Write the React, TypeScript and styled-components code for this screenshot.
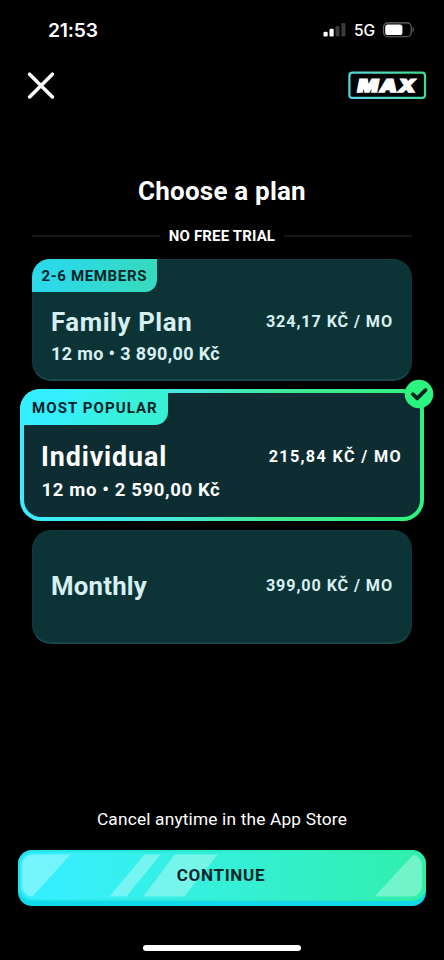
import React from "react";
import styled, { createGlobalStyle, css } from "styled-components";

const GlobalStyle = createGlobalStyle`
  * { box-sizing: border-box; }
  body { margin: 0; background: #000; }
`;

const Screen = styled.div`
  width: 444px;
  height: 960px;
  background: #000;
  color: #fff;
  font-family: Roboto, "Liberation Sans", sans-serif;
  font-weight: 700;
  display: flex;
  flex-direction: column;
  overflow: hidden;
  white-space: nowrap;
`;

const StatusBar = styled.header`
  height: 60px;
  padding: 0 29px 0 48px;
  display: flex;
  align-items: center;
  justify-content: space-between;
  font-family: Inter, sans-serif;
`;

const Clock = styled.time`
  font-size: 19.3px;
  font-weight: 600;
  letter-spacing: -0.2px;
`;

const StatusIcons = styled.div`
  display: flex;
  align-items: center;
  height: 22px;
`;

const Network = styled.span`
  margin: 1px 8px 0 8px;
  width: 21px;
  font-size: 15.5px;
  font-weight: 500;
  letter-spacing: -0.2px;
`;

const NavBar = styled.nav`
  height: 50px;
  padding: 0 17px 0 27px;
  display: flex;
  align-items: center;
  justify-content: space-between;
`;

const CloseButton = styled.button`
  border: 0;
  padding: 0;
  background: none;
  width: 28px;
  height: 28px;
`;

const Title = styled.h1`
  margin: 66px 0 0;
  font-size: 26px;
  line-height: 30px;
  letter-spacing: 0.2px;
  text-align: center;
`;

const TrialDivider = styled.div`
  margin: 20px 32px 0;
  height: 20px;
  display: flex;
  align-items: center;
  gap: 9px;
  font-size: 15px;
  line-height: 20px;
  letter-spacing: 0.15px;

  &::before,
  &::after {
    content: "";
    flex: 1;
    height: 2px;
    background: #161616;
  }
`;

const Plans = styled.main`
  margin-top: 13px;
  display: flex;
  flex-direction: column;
  align-items: center;
`;

const Card = styled.section<{ $selected?: boolean; $height: number }>`
  position: relative;
  height: ${(p) => p.$height}px;
  display: flex;
  flex-direction: column;
  ${(p) =>
    p.$selected
      ? css`
          width: 404px;
          margin: 8px 0 9px;
          border: 4.5px solid transparent;
          border-radius: 21px;
          background:
            linear-gradient(#0d2d33, #0d2d33) padding-box,
            linear-gradient(100deg, #3bebff 5%, #46e8dc 40%, #41ea91 65%, #2bf37c 100%) border-box;
          color: #fff;
        `
      : css`
          width: 380px;
          border: 1px solid #10393d;
          border-bottom: 2px solid #18464b;
          border-radius: 19px;
          background: #0c3437;
          color: #d8eff1;
        `}
`;

const Ribbon = styled.div<{ $selected?: boolean }>`
  color: #07242a;
  font-size: 15px;
  align-self: flex-start;
  ${(p) =>
    p.$selected
      ? css`
          margin: -4px 0 0 -4px;
          width: 148px;
          height: 36px;
          padding-left: 12px;
          line-height: 38px;
          letter-spacing: 1.08px;
          border-radius: 20px 0 13px 0;
          background: linear-gradient(115deg, #34efff 25%, #38f0d5 75%);
        `
      : css`
          margin: -1px 0 0 -1px;
          width: 125px;
          height: 33px;
          padding-left: 9.5px;
          line-height: 34px;
          letter-spacing: 0.65px;
          border-radius: 18px 0 12px 0;
          background: linear-gradient(115deg, #2cd9e6 25%, #35dac0 85%);
        `}
`;

const PlanRow = styled.div<{ $selected?: boolean; $top: number }>`
  margin-top: ${(p) => p.$top}px;
  padding: ${(p) => (p.$selected ? "0 18px 0 17px" : "0 18px 0 18px")};
  display: flex;
  align-items: center;
  justify-content: space-between;
  height: 30px;
`;

const PlanName = styled.h2<{ $spacing: number; $size?: number }>`
  margin: 0;
  font-size: ${(p) => p.$size ?? 25.8}px;
  line-height: 30px;
  letter-spacing: ${(p) => p.$spacing}px;
`;

const Price = styled.span<{ $spacing: number }>`
  font-size: 16.2px;
  line-height: 30px;
  letter-spacing: ${(p) => p.$spacing}px;
`;

const Terms = styled.p<{ $selected?: boolean }>`
  margin: ${(p) => (p.$selected ? "6px 0 0 17.5px" : "5px 0 0 18px")};
  font-size: ${(p) => (p.$selected ? 18.5 : 18)}px;
  line-height: 24px;
  letter-spacing: ${(p) => (p.$selected ? 0.64 : 0.36)}px;
`;

const CheckBadge = styled.svg`
  position: absolute;
  right: -14px;
  top: -14px;
  width: 30px;
  height: 30px;
`;

const Footer = styled.footer`
  margin-top: auto;
  height: 153px;
  display: flex;
  flex-direction: column;
  align-items: center;
`;

const CancelNote = styled.p`
  margin: 0;
  font-size: 17.3px;
  font-weight: 400;
  line-height: 24px;
  letter-spacing: 0.18px;
`;

const ContinueButton = styled.button`
  position: relative;
  margin: 19px 0 0;
  padding: 0 2px 0 0;
  width: 408px;
  height: 56px;
  border: 0;
  border-radius: 14px;
  overflow: hidden;
  background: #10d9ec;
  color: #05262a;
  font: 700 17px/51px Roboto, sans-serif;
  letter-spacing: 0.7px;
  display: block;
`;

const ButtonFace = styled.svg`
  position: absolute;
  inset: 0;
`;

const ButtonLabel = styled.span`
  position: relative;
  display: block;
  height: 56px;
`;

const HomeIndicator = styled.div`
  margin-top: 39px;
  width: 158px;
  height: 6px;
  border-radius: 3px;
  background: #fff;
`;

const SignalIcon = () => (
  <svg width="23" height="16" viewBox="0 0 23 16">
    <rect x="0.5" y="9.7" width="4.2" height="4.8" rx="1.2" fill="#fff" />
    <rect x="6.5" y="6.8" width="4.2" height="7.7" rx="1.2" fill="#fff" />
    <rect x="12.5" y="4" width="4" height="10.5" rx="1.2" fill="#3a3a3a" />
    <rect x="18.4" y="1" width="4" height="13.5" rx="1.2" fill="#3a3a3a" />
  </svg>
);

const BatteryIcon = () => (
  <svg width="32" height="16" viewBox="0 0 32 16">
    <rect x="0.6" y="0.9" width="27.6" height="13.8" rx="4.2" fill="none" stroke="#6e6e6e" strokeWidth="1.1" />
    <rect x="2.2" y="2.5" width="17.2" height="10.6" rx="2.6" fill="#fff" />
    <path d="M29.6 5.5c1.6.6 1.6 4 0 4.6z" fill="#777" />
  </svg>
);

const CloseIcon = () => (
  <svg width="28" height="28" viewBox="0 0 28 28">
    <path d="M2.6 3.2 25.4 26M25.4 3.2 2.6 26" stroke="#fff" strokeWidth="3.5" strokeLinecap="round" />
  </svg>
);

const MaxLogo = () => (
  <svg width="79" height="28" viewBox="0 0 79 28">
    <defs>
      <linearGradient id="maxFrame" x1="0" y1="0.4" x2="1" y2="0.2">
        <stop offset="0" stopColor="#58d5e0" />
        <stop offset="0.5" stopColor="#4fdcc0" />
        <stop offset="1" stopColor="#3ddb8c" />
      </linearGradient>
    </defs>
    <rect x="1.4" y="1.7" width="75.6" height="25.2" rx="3" fill="none" stroke="url(#maxFrame)" strokeWidth="2.2" />
    <text
      transform="translate(8.6 20.7) skewX(-11) scale(1.24 1)"
      textLength="46.6"
      lengthAdjust="spacing"
      fontFamily="Inter, sans-serif"
      fontSize="17.6"
      fontWeight="900"
      fill="#fff"
      stroke="#fff"
      strokeWidth="1.4"
      strokeLinejoin="miter"
    >
      MAX
    </text>
  </svg>
);

type Plan = {
  name: string;
  price: string;
  ribbon?: string;
  terms?: string;
  selected?: boolean;
  height: number;
  top: number;
  nameSize?: number;
  nameSpacing: number;
  priceSpacing: number;
};

const plans: Plan[] = [
  { name: "Family Plan", price: "324,17 KČ / MO", ribbon: "2-6 MEMBERS", terms: "12 mo • 3 890,00 Kč", height: 122, top: 15, nameSpacing: 0.6, priceSpacing: 0.9 },
  { name: "Individual", price: "215,84 KČ / MO", ribbon: "MOST POPULAR", terms: "12 mo • 2 590,00 Kč", selected: true, height: 132, top: 17, nameSize: 26.8, nameSpacing: 0.9, priceSpacing: 1.35 },
  { name: "Monthly", price: "399,00 KČ / MO", height: 114, top: 40, nameSpacing: 0.2, priceSpacing: 0.9 },
];

const PlanCard = ({ plan }: { plan: Plan }) => (
  <Card $selected={plan.selected} $height={plan.height}>
    {plan.ribbon && <Ribbon $selected={plan.selected}>{plan.ribbon}</Ribbon>}
    <PlanRow $selected={plan.selected} $top={plan.top}>
      <PlanName $spacing={plan.nameSpacing} $size={plan.nameSize}>{plan.name}</PlanName>
      <Price $spacing={plan.priceSpacing}>{plan.price}</Price>
    </PlanRow>
    {plan.terms && <Terms $selected={plan.selected}>{plan.terms}</Terms>}
    {plan.selected && (
      <CheckBadge viewBox="0 0 30 30">
        <circle cx="15" cy="15" r="14.3" fill="#2bf57f" />
        <path d="m8.8 15.2 4.4 4.2 8.4-8.4" fill="none" stroke="#06231f" strokeWidth="3.8" strokeLinecap="round" strokeLinejoin="round" />
      </CheckBadge>
    )}
  </Card>
);

export default function App() {
  return (
    <>
      <GlobalStyle />
      <Screen>
        <StatusBar>
          <Clock>21:53</Clock>
          <StatusIcons>
            <SignalIcon />
            <Network>5G</Network>
            <BatteryIcon />
          </StatusIcons>
        </StatusBar>
        <NavBar>
          <CloseButton aria-label="Close">
            <CloseIcon />
          </CloseButton>
          <MaxLogo />
        </NavBar>
        <Title>Choose a plan</Title>
        <TrialDivider>NO FREE TRIAL</TrialDivider>
        <Plans>
          {plans.map((plan) => (
            <PlanCard key={plan.name} plan={plan} />
          ))}
        </Plans>
        <Footer>
          <CancelNote>Cancel anytime in the App Store</CancelNote>
          <ContinueButton>
            <ButtonFace width="408" height="56" viewBox="0 0 408 56">
              <defs>
                <linearGradient id="face" x1="0" y1="0" x2="1" y2="0">
                  <stop offset="0.1" stopColor="#36effc" />
                  <stop offset="0.5" stopColor="#35f0d8" />
                  <stop offset="1" stopColor="#30efab" />
                </linearGradient>
                <linearGradient id="rim" x1="0" y1="0" x2="1" y2="0">
                  <stop offset="0" stopColor="#24e2ee" />
                  <stop offset="0.5" stopColor="#2fead0" />
                  <stop offset="1" stopColor="#2cf0a2" />
                </linearGradient>
                <clipPath id="shine">
                  <rect x="4" y="4.5" width="400" height="42" rx="11" />
                </clipPath>
              </defs>
              <rect width="408" height="51" rx="14" fill="url(#rim)" />
              <rect x="2.5" y="2.5" width="403" height="47" rx="12" fill="url(#face)" />
              <g clipPath="url(#shine)" fill="#fff" fillOpacity="0.32">
                <path d="M-30 4h83L14 47h-44z" />
                <path d="M127 4h16l-35 43H91z" />
                <path d="M157 4h43l-34 43h-41z" />
                <path d="M396 4h12v43h-52z" />
              </g>
            </ButtonFace>
            <ButtonLabel>CONTINUE</ButtonLabel>
          </ContinueButton>
          <HomeIndicator />
        </Footer>
      </Screen>
    </>
  );
}
